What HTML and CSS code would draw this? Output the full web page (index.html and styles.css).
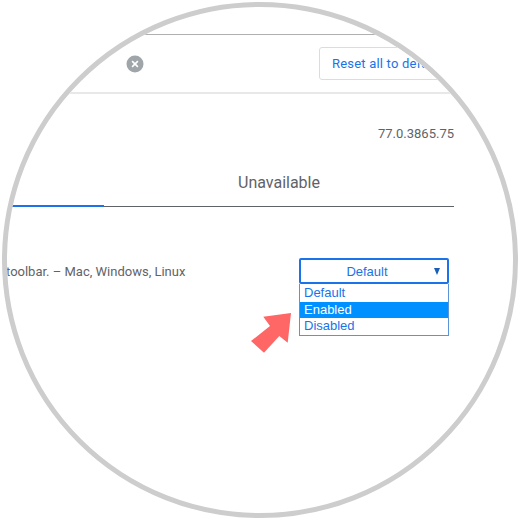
FILE: index.html
```html
<!DOCTYPE html>
<html lang="en">
<head>
<meta charset="utf-8">
<title>Flags</title>
<link rel="stylesheet" href="styles.css">
</head>
<body>
<div class="lens">
  <header class="searchbar">
    <span class="clear" aria-label="Clear">
      <svg width="18" height="18" viewBox="0 0 18 18"><circle cx="9" cy="9" r="8.5" fill="#9fa5a8"/><path d="M6.1 6.1l5.8 5.8M11.9 6.1l-5.8 5.8" stroke="#fff" stroke-width="1.6" fill="none"/></svg>
    </span>
    <button class="reset">Reset all to defaults</button>
  </header>
  <main class="content">
    <div class="version">77.0.3865.75</div>
    <nav class="tabs">
      <div class="tab active"></div>
      <div class="tab">Unavailable</div>
    </nav>
    <section class="flag">
      <p class="desc">toolbar. – Mac, Windows, Linux</p>
      <div class="select">
        <div class="current">Default<span class="caret"></span></div>
        <ul class="options">
          <li>Default</li>
          <li class="selected">Enabled</li>
          <li>Disabled</li>
        </ul>
      </div>
    </section>
  </main>
  <svg class="arrow" width="41" height="43" viewBox="0 0 41 43"><path d="M40 2L36.7 31.7L28.3 25L13 41.7L0 30L19 15L12.3 5.7Z" fill="#ff6666"/></svg>
</div>
</body>
</html>
```

FILE: styles.css
```css
* { box-sizing: border-box; }
html, body { margin: 0; padding: 0; background: #fff; }
body { width: 520px; height: 520px; padding: 2px; font-family: Roboto, "Liberation Sans", sans-serif; }
.lens {
  position: relative;
  width: 516px;
  height: 516px;
  border: 5px solid #cdcdcd;
  border-radius: 50%;
  overflow: hidden;
  background: #fff;
  padding-top: 27px;
}
.searchbar {
  height: 60px;
  border-top: 1px solid #b0b0b0;
  border-bottom: 2px solid #e8e8e8;
  display: flex;
  align-items: center;
  padding-left: 119px;
  gap: 175px;
}
.clear { display: flex; width: 18px; height: 18px; align-self: flex-start; margin-top: 20px; }
.reset {
  flex: none;
  width: 180px;
  height: 33px;
  padding: 0 0 0 12px;
  text-align: left;
  background: #fff;
  border: 1px solid #dadce0;
  border-radius: 3px;
  color: #1a73e8;
  font: 400 13px Roboto, sans-serif;
  letter-spacing: 0.2px;
  white-space: nowrap;
}
.content { width: 447px; }
.version { margin-top: 32px; height: 16px; line-height: 16px; text-align: right; font-size: 13px; color: #5f6368; }
.tabs {
  margin-top: 26px;
  height: 39px;
  display: grid;
  grid-template-columns: 97px 1fr;
  border-bottom: 1px solid #5f6368;
}
.tab { text-align: center; font-size: 16px; line-height: 30px; color: #5f6368; }
.tab.active { height: 39px; border-bottom: 2px solid #1a73e8; color: #1a73e8; }
.flag {
  margin-top: 51px;
  display: flex;
  justify-content: space-between;
  align-items: flex-start;
  padding-right: 5px;
}
.desc { margin: 0 0 0 -1px; line-height: 28px; font-size: 13px; color: #5f6368; }
.select { width: 150px; font: 13px "Liberation Sans", sans-serif; color: #1a73e8; }
.current {
  position: relative;
  height: 26px;
  line-height: 24px;
  text-align: center;
  border: 2px solid #1a73e8;
  border-radius: 2px;
  padding-right: 14px;
}
.caret {
  position: absolute;
  right: 7px;
  top: 8px;
  border-left: 3.5px solid transparent;
  border-right: 3.5px solid transparent;
  border-top: 7px solid #1a5fb4;
}
.options {
  list-style: none;
  margin: 0;
  padding: 0;
  height: 52px;
  border: 1px solid #5a95d8;
  border-top: 0;
  line-height: 16px;
}
.options li { height: 16px; padding-left: 4px; }
.options li:first-child { height: 18px; line-height: 17px; }
.options .selected { background: #0090ff; color: #fff; }
.arrow { position: absolute; left: 244px; top: 304px; }
```
